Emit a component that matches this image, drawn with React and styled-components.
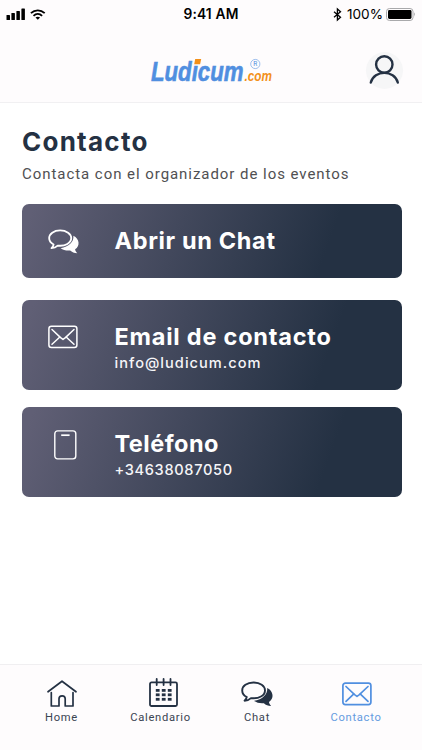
import styled, { createGlobalStyle } from "styled-components";

const GlobalStyle = createGlobalStyle`
  * {
    box-sizing: border-box;
  }

  body {
    margin: 0;
    background: #ffffff;
    font-family: "Roboto", "Liberation Sans", sans-serif;
  }

  svg {
    display: block;
    overflow: visible;
  }
`;

const Screen = styled.div`
  display: flex;
  flex-direction: column;
  width: 422px;
  height: 750px;
  overflow: hidden;
`;

const Header = styled.header`
  height: 103px;
  background: #fefcfd;
  border-bottom: 1px solid #f1f0f2;
`;

const StatusBar = styled.div`
  display: grid;
  grid-template-columns: 1fr auto 1fr;
  align-items: center;
  height: 28px;
  padding: 0 6px;
  color: #000000;
  font-family: "Inter", sans-serif;
`;

const StatusGroup = styled.div`
  display: flex;
  align-items: center;
  gap: 5px;
  justify-content: ${(props) => (props.$end ? "flex-end" : "flex-start")};
`;

const Time = styled.div`
  font-size: 13.8px;
  font-weight: 600;
  letter-spacing: 0.15px;
`;

const Percent = styled.span`
  margin-right: -2px;
  font-size: 13.6px;
`;

const TopBar = styled.div`
  display: grid;
  grid-template-columns: 1fr auto 1fr;
  align-items: center;
  height: 85px;
  padding: 0 19px 0 21px;
`;

const LogoText = styled.text`
  font-family: "Liberation Sans", sans-serif;
  font-style: italic;
  font-weight: 700;
  font-size: ${(props) => props.$size}px;
`;

const Avatar = styled.div`
  justify-self: end;
  width: 37px;
  height: 37px;
  border-radius: 50%;
  background: #f6f6f7;
`;

const Content = styled.main`
  flex: 1;
  padding: 24px 20px 0 22px;
`;

const Title = styled.h1`
  margin: 0;
  color: #243143;
  font-family: "Inter", sans-serif;
  font-size: 26px;
  font-weight: 700;
  line-height: 29px;
  letter-spacing: 1.25px;
`;

const Subtitle = styled.p`
  margin: 8px 0 19px;
  color: #505052;
  font-size: 15px;
  line-height: 21px;
  letter-spacing: 0.95px;
  white-space: nowrap;
`;

const Card = styled.a`
  display: flex;
  align-items: center;
  height: ${(props) => props.$height}px;
  margin-bottom: ${(props) => props.$gap || 0}px;
  border-radius: 7px;
  background: linear-gradient(110deg, #605f75 3%, #243143 79%);
  color: #ffffff;
  font-family: "Inter", sans-serif;
`;

const CardIcon = styled.div`
  flex: none;
  width: 92.5px;
  padding-left: ${(props) => props.$inset}px;
  margin-top: ${(props) => props.$shift || 0}px;
`;

const CardTitle = styled.div`
  font-size: 23.5px;
  font-weight: 700;
  line-height: 30px;
  letter-spacing: ${(props) => props.$spacing}px;
`;

const CardDetail = styled.div`
  color: #f5f5f8;
  font-size: 14.6px;
  font-weight: 500;
  line-height: 23px;
  letter-spacing: ${(props) => props.$spacing}px;
`;

const CardText = styled.div`
  padding-top: ${(props) => props.$top || 0}px;
  white-space: nowrap;
`;

const TabBar = styled.nav`
  display: grid;
  grid-template-columns: 99px 99px 94px 104px;
  height: 86px;
  padding: 13px 0 0 12px;
  background: #fefcfd;
  border-top: 1px solid #f0eff1;
`;

const Tab = styled.a`
  display: flex;
  flex-direction: column;
  align-items: center;
  color: ${(props) => (props.$active ? "#508fe0" : "#243143")};
`;

const TabIcon = styled.div`
  display: flex;
  align-items: center;
  height: 31px;
  padding-left: ${(props) => props.$inset || 0}px;
  padding-bottom: ${(props) => props.$lift || 0}px;
`;

const TabLabel = styled.span`
  margin-top: 1px;
  color: ${(props) => (props.$active ? "#659be0" : "#3b4452")};
  font-size: 11.2px;
  line-height: 15px;
  letter-spacing: 0.7px;
`;

function SignalIcon() {
  return (
    <svg width="19" height="12" viewBox="0 0 19 12" fill="currentColor">
      <rect x="0.5" y="7" width="3.5" height="5" rx="0.6" />
      <rect x="5.4" y="5" width="3.5" height="7" rx="0.6" />
      <rect x="10.4" y="3" width="3.5" height="9" rx="0.6" />
      <rect x="15.4" y="0.5" width="3.5" height="11.5" rx="0.6" />
    </svg>
  );
}

function WifiIcon() {
  return (
    <svg width="15" height="11" viewBox="0 0 15 11" fill="none" stroke="currentColor" strokeWidth="1.8">
      <path d="M0.9 4.2C4.9 0.3 10.7 0.3 14.7 4.2" />
      <path d="M3.5 6.8C6 4.4 9.6 4.4 12.1 6.8" />
      <path d="M5.5 8.6C6.8 7.5 8.8 7.5 10.1 8.6L7.8 10.8Z" fill="currentColor" stroke="none" />
    </svg>
  );
}

function BluetoothIcon() {
  return (
    <svg width="9" height="13" viewBox="0 0 9 13" fill="none" stroke="currentColor" strokeWidth="1.3">
      <path d="M1 3.7L7.5 9.2L4.4 12V1L7.5 3.8L1 9.3" />
    </svg>
  );
}

function BatteryIcon() {
  return (
    <svg width="30" height="13" viewBox="0 0 30 13">
      <rect x="0.5" y="0.5" width="26.5" height="12" rx="3" fill="none" stroke="#a9a9ab" />
      <rect x="2" y="2" width="23.5" height="9" rx="1.4" fill="#000000" />
      <path d="M28.2 4.3Q30 6.5 28.2 8.7Z" fill="#8f8f92" />
    </svg>
  );
}

function Logo() {
  return (
    <svg width="124" height="30" viewBox="0 0 124 30">
      <LogoText x="1" y="25" $size={27.5} fill="#508fe0" stroke="#508fe0" strokeWidth="0.6" textLength="92.5" lengthAdjust="spacingAndGlyphs">
        Ludıcum
      </LogoText>
      <path d="M45.2 3H51.2L50.1 8.2H44.2Z" fill="#f39019" />
      <LogoText x="94.5" y="25" $size={14} fill="#f39019" textLength="27.5" lengthAdjust="spacingAndGlyphs">
        .com
      </LogoText>
      <circle cx="105.3" cy="8" r="4.6" fill="none" stroke="#76a5e6" strokeWidth="0.7" />
      <text x="105.3" y="10.3" textAnchor="middle" fontSize="6.5" fill="#508fe0">
        R
      </text>
    </svg>
  );
}

function UserIcon() {
  return (
    <svg width="37" height="37" viewBox="0 0 37 37" fill="none" stroke="#243143" strokeWidth="2.4" strokeLinecap="round">
      <circle cx="18.3" cy="12.5" r="8.2" />
      <path d="M4.8 30.5C8.2 17.6 28.4 17.6 31.8 30.5" />
    </svg>
  );
}

function ChatIcon({ width }) {
  return (
    <svg width={width} height={width * 0.8} viewBox="0 0 32 25.6">
      <path
        d="M12.5 1.5C6 1.5 1.2 5.1 1.2 9.4C1.2 12.2 3 14.6 5.8 16C5.6 17.5 4.8 18.6 3.6 19.7C6.1 19.6 8.4 18.6 10 17.1C18 18.1 24 14.3 24 9.4C24 5.1 19 1.5 12.5 1.5Z"
        fill="none"
        stroke="currentColor"
        strokeWidth="1.9"
        strokeLinejoin="round"
      />
      <path
        d="M26.2 7C26.9 13.5 21.4 18.5 13 19.8C15.6 21.8 19.3 22.6 22.9 22.2C24.7 23.9 27.1 24.9 30.2 25C29 23.8 28 22.5 28 21C33.3 17.7 32.7 10.1 26.2 7Z"
        fill="currentColor"
      />
    </svg>
  );
}

function MailIcon({ stroke = 1.5 }) {
  return (
    <svg width="30" height="24" viewBox="0 0 30 24" fill="none" stroke="currentColor" strokeWidth={stroke} strokeLinecap="round">
      <rect x="0.9" y="1.2" width="28" height="21.4" rx="2.5" />
      <path d="M4 4.5L12.6 12.6L15 14.4L17.4 12.6L26 4.5" strokeLinejoin="round" />
      <path d="M4 19.3L11.6 12.2M26 19.3L18.4 12.2" />
    </svg>
  );
}

function PhoneIcon() {
  return (
    <svg width="23" height="30" viewBox="0 0 23 30" fill="none" stroke="currentColor" strokeWidth="1.4">
      <rect x="0.8" y="0.9" width="21" height="28" rx="2.8" />
      <path d="M7.2 5.2H15.6" strokeWidth="1.7" />
    </svg>
  );
}

function HomeIcon() {
  return (
    <svg width="30" height="27" viewBox="0 0 30 27" fill="none" stroke="currentColor" strokeWidth="1.7" strokeLinecap="round" strokeLinejoin="round">
      <path d="M1 11.8L15 1.2L29 11.8" />
      <path d="M4.3 12.5V26H12V18.8C12 14.8 18.2 14.8 18.2 18.8V26H26V12.5" />
    </svg>
  );
}

function CalendarIcon() {
  const columns = [6.8, 12.8, 18.8];
  const rows = [11, 15.4, 19.9];

  return (
    <svg width="29" height="29" viewBox="0 0 29 29">
      <g fill="none" stroke="currentColor" strokeWidth="1.8" strokeLinecap="round">
        <rect x="1" y="4.4" width="27" height="23.6" rx="1.5" />
        <path d="M7.7 1V7M14.6 1V7M21.5 1V7" />
      </g>
      {rows.map((y) =>
        columns.map((x) => <rect key={`${x}-${y}`} x={x} y={y} width="3.8" height="2.8" fill="currentColor" />)
      )}
    </svg>
  );
}

export default function App() {
  return (
    <Screen>
      <GlobalStyle />
      <Header>
        <StatusBar>
          <StatusGroup>
            <SignalIcon />
            <WifiIcon />
          </StatusGroup>
          <Time>9:41 AM</Time>
          <StatusGroup $end>
            <BluetoothIcon />
            <Percent>100%</Percent>
            <BatteryIcon />
          </StatusGroup>
        </StatusBar>
        <TopBar>
          <span />
          <Logo />
          <Avatar>
            <UserIcon />
          </Avatar>
        </TopBar>
      </Header>

      <Content>
        <Title>Contacto</Title>
        <Subtitle>Contacta con el organizador de los eventos</Subtitle>
        <Card $height={74} $gap={22}>
          <CardIcon $inset={25.5}>
            <ChatIcon width={31} />
          </CardIcon>
          <CardTitle $spacing={0.65}>Abrir un Chat</CardTitle>
        </Card>
        <Card $height={90} $gap={17}>
          <CardIcon $inset={26} $shift={-16}>
            <MailIcon />
          </CardIcon>
          <CardText $top={6}>
            <CardTitle $spacing={0.78}>Email de contacto</CardTitle>
            <CardDetail $spacing={1.02}>info@ludicum.com</CardDetail>
          </CardText>
        </Card>
        <Card $height={90}>
          <CardIcon $inset={31.5} $shift={-14}>
            <PhoneIcon />
          </CardIcon>
          <CardText $top={6}>
            <CardTitle $spacing={0.5}>Teléfono</CardTitle>
            <CardDetail $spacing={0.65}>+34638087050</CardDetail>
          </CardText>
        </Card>
      </Content>

      <TabBar>
        <Tab>
          <TabIcon $inset={1}>
            <HomeIcon />
          </TabIcon>
          <TabLabel>Home</TabLabel>
        </Tab>
        <Tab>
          <TabIcon $inset={5} $lift={2}>
            <CalendarIcon />
          </TabIcon>
          <TabLabel>Calendario</TabLabel>
        </Tab>
        <Tab>
          <TabIcon>
            <ChatIcon width={32} />
          </TabIcon>
          <TabLabel>Chat</TabLabel>
        </Tab>
        <Tab $active>
          <TabIcon $inset={2}>
            <MailIcon stroke={1.7} />
          </TabIcon>
          <TabLabel $active>Contacto</TabLabel>
        </Tab>
      </TabBar>
    </Screen>
  );
}
